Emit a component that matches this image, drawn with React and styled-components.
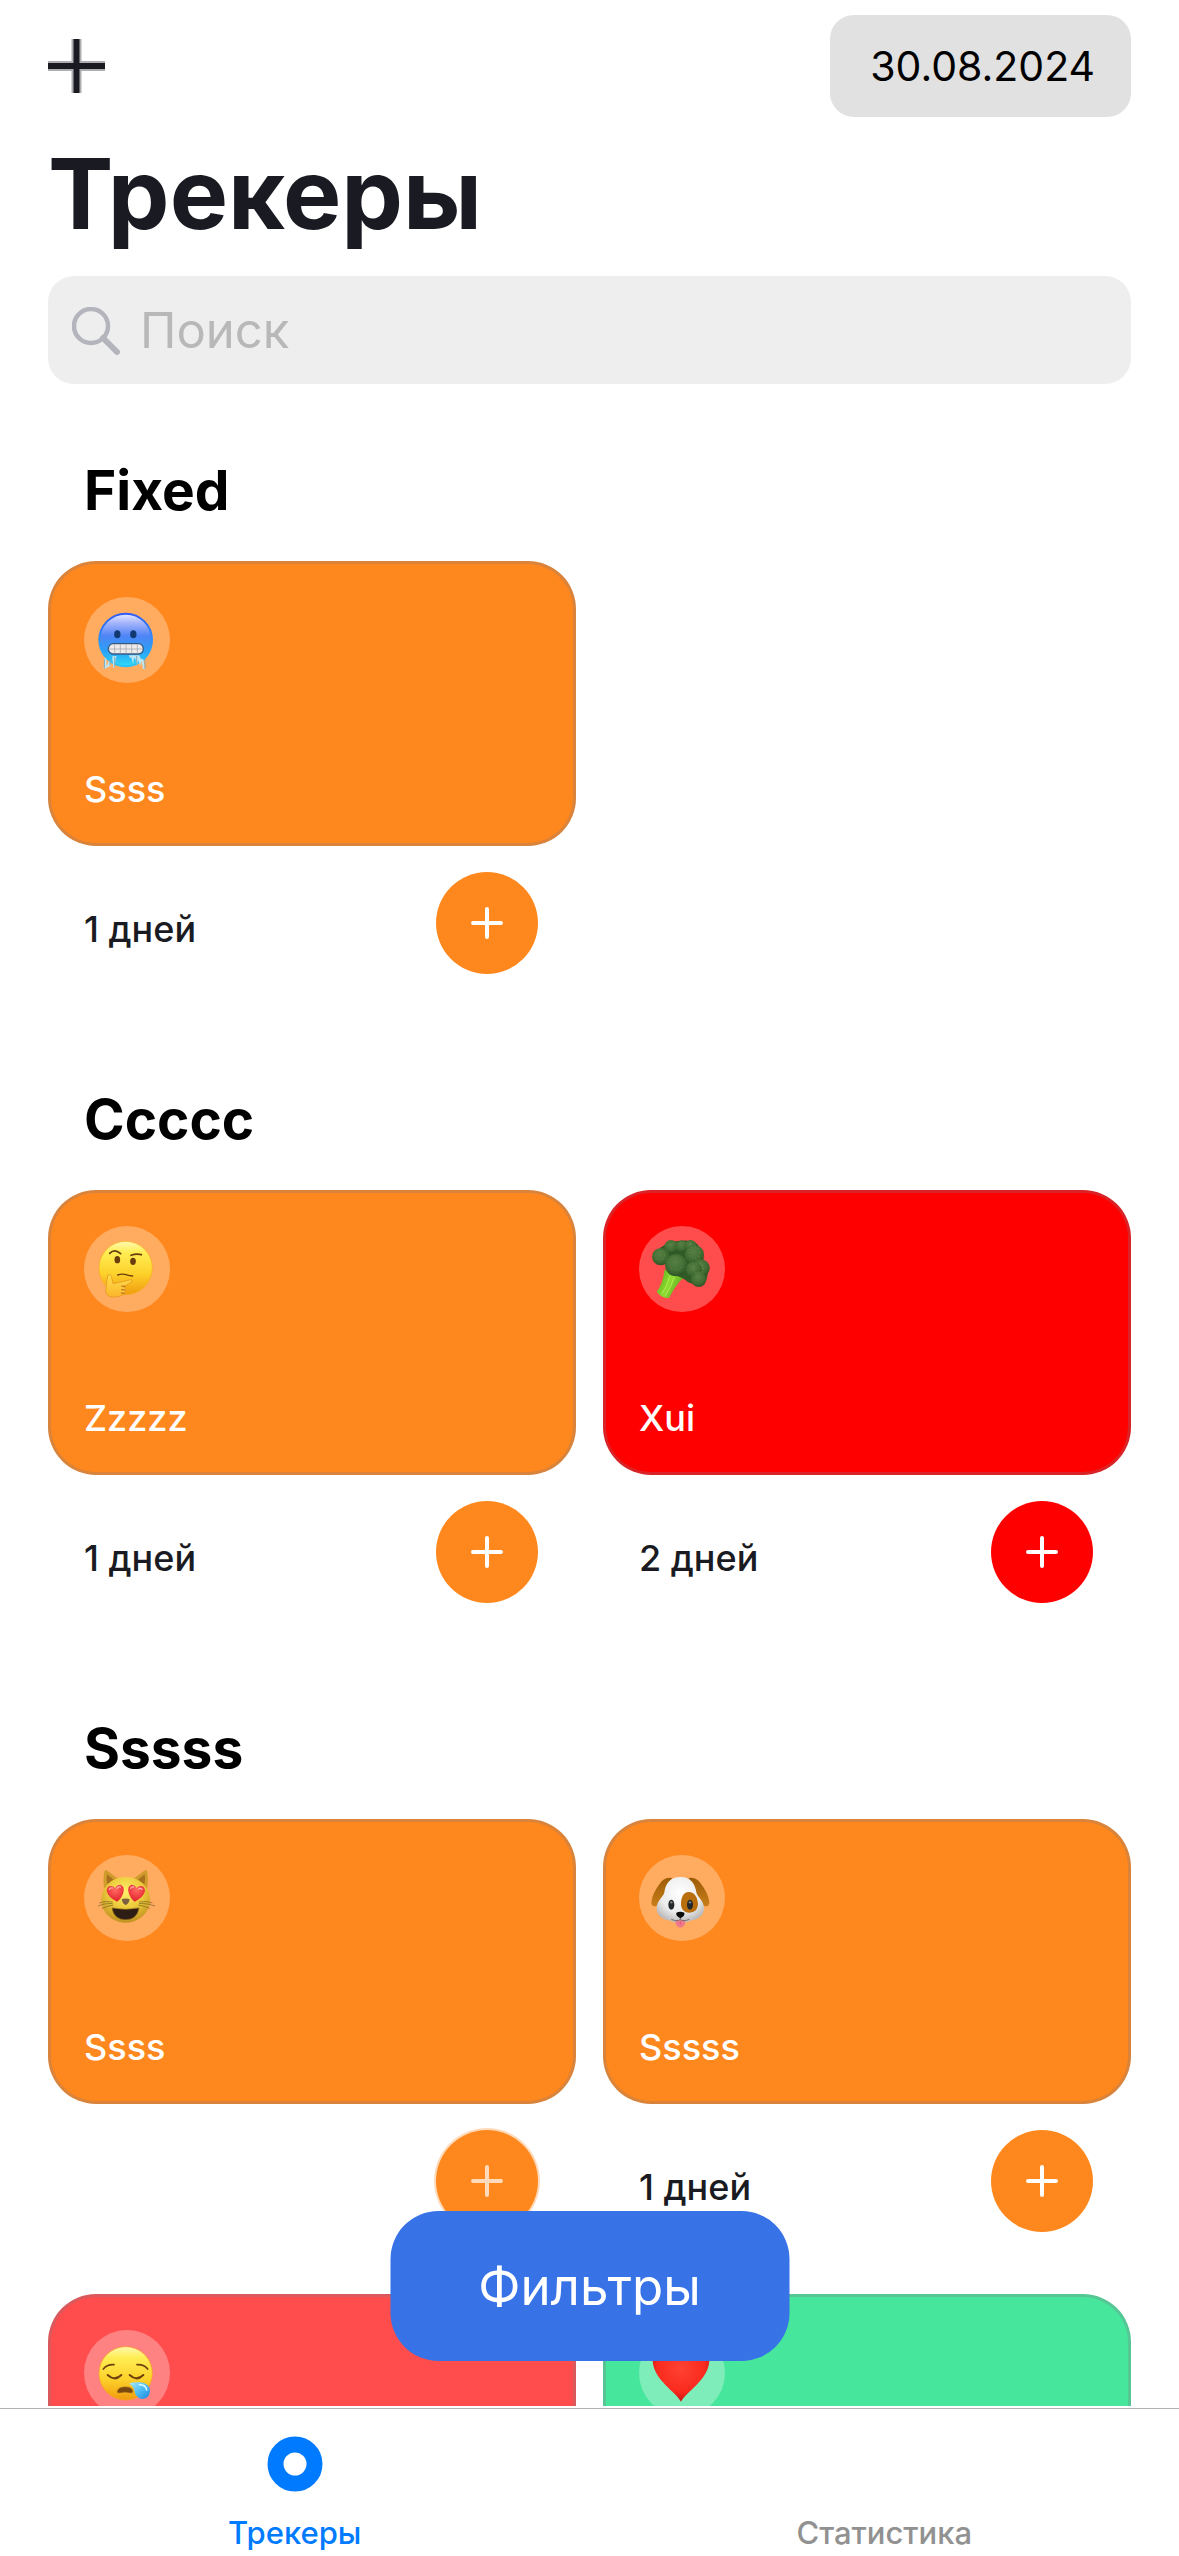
import React from "react";
import styled, { createGlobalStyle } from "styled-components";

const ORANGE = "#ff881e";
const RED = "#ff0000";
const CORAL = "#ff4d4d";
const GREEN = "#47e69d";

const GlobalStyle = createGlobalStyle`
  * { box-sizing: border-box; }
  body { margin: 0; background: #fff; }
  body, button, input { font-family: Inter, "Noto Sans", sans-serif; }
  button { border: 0; padding: 0; cursor: pointer; }
`;

const Screen = styled.div`
  display: flex;
  flex-direction: column;
  height: 100vh;
  background: #fff;
  color: #1a1b22;
`;

const Header = styled.header`
  padding: 15px 48px 0;
`;

const Toolbar = styled.div`
  display: flex;
  align-items: center;
  justify-content: space-between;
`;

const AddButton = styled.button`
  display: flex;
  background: none;
`;

const DateButton = styled.button`
  height: 102px;
  padding: 0 36px 0 40px;
  border-radius: 24px;
  background: #e1e1e1;
  color: #000;
  font-size: 41px;
`;

const Title = styled.h1`
  margin: 17px 0 22px;
  font-size: 98px;
  line-height: 120px;
  font-weight: 700;
`;

const SearchField = styled.label`
  display: flex;
  align-items: center;
  gap: 20px;
  height: 108px;
  padding: 2px 24px 0;
  border-radius: 26px;
  background: #eeeeee;
`;

const SearchInput = styled.input`
  flex: 1;
  min-width: 0;
  padding: 0;
  border: 0;
  outline: 0;
  background: none;
  color: #1a1b22;
  font-size: 49px;
  line-height: 60px;
  &::placeholder { color: #b8b8b9; opacity: 1; }
`;

const ListArea = styled.div`
  position: relative;
  flex: 1;
  min-height: 0;
  display: flex;
`;

const List = styled.main`
  flex: 1;
  display: flex;
  flex-direction: column;
  gap: 81px;
  padding: 73px 48px 0;
  overflow-y: auto;
  scrollbar-width: none;
`;

const SectionTitle = styled.h2`
  margin: 0 36px 38px;
  color: #000;
  font-size: 55px;
  line-height: 66px;
  font-weight: 700;
`;

const Grid = styled.div`
  display: grid;
  grid-template-columns: 1fr 1fr;
  gap: 31px 27px;
`;

const Card = styled.div`
  display: flex;
  flex-direction: column;
  align-items: flex-start;
  justify-content: space-between;
  height: 285px;
  padding: 33px;
  border: 3px solid rgba(124, 122, 132, 0.29);
  border-radius: 48px;
  background: ${(p) => p.$color};
`;

const EmojiBadge = styled.span`
  display: flex;
  width: 86px;
  height: 86px;
  border-radius: 50%;
  background: rgba(255, 255, 255, 0.3);
`;

const CardName = styled.span`
  color: #fff;
  font-size: 36px;
  line-height: 42px;
  font-weight: 500;
`;

const CardFooter = styled.div`
  display: flex;
  align-items: center;
  justify-content: space-between;
  padding: 26px 38px 31px 36px;
`;

const Days = styled.span`
  padding-top: 12px;
  font-size: 36px;
  line-height: 42px;
  font-weight: 500;
`;

const DoneButton = styled.button`
  display: flex;
  align-items: center;
  justify-content: center;
  width: 102px;
  height: 102px;
  border-radius: 50%;
  background: ${(p) => p.$color};
  color: ${(p) => (p.$dimmed ? "rgba(255, 255, 255, 0.7)" : "#fff")};
  box-shadow: ${(p) => (p.$dimmed ? "0 0 0 2px rgba(255, 136, 30, 0.3)" : "none")};
`;

const FilterButton = styled.button`
  position: absolute;
  bottom: 45px;
  left: 50%;
  transform: translateX(-50%);
  min-width: 399px;
  height: 150px;
  border-radius: 48px;
  background: #3772e7;
  color: #fff;
  font-size: 51px;
`;

const TabBar = styled.nav`
  display: grid;
  grid-template-columns: 1fr 1fr;
  margin-top: 2px;
  border-top: 1px solid #b2b2b6;
  background: #fff;
`;

const Tab = styled.a`
  display: flex;
  flex-direction: column;
  align-items: center;
  justify-content: flex-end;
  padding: 27px 0 5px;
  gap: 23px;
  color: ${(p) => (p.$active ? "#007bff" : "#919191")};
  font-size: 31px;
  line-height: 36px;
  font-weight: 500;
  text-decoration: none;
`;

const AddIcon = () => (
  <svg width="57" height="54" viewBox="0 0 57 54" aria-hidden="true">
    <path d="M28.5 0v54M0 27h57" stroke="#1a1b22" strokeWidth="10" opacity=".35" />
    <path d="M28.5 0v54M0 27h57" stroke="#1a1b22" strokeWidth="6" />
  </svg>
);

const SearchIcon = () => (
  <svg width="48" height="48" viewBox="0 0 48 48" fill="none" stroke="#b4b5bc" aria-hidden="true">
    <circle cx="19" cy="19" r="17" strokeWidth="4.500" />
    <path d="M31 31l14 14" strokeWidth="6" strokeLinecap="round" />
  </svg>
);

const PlusIcon = () => (
  <svg width="32" height="32" viewBox="0 0 32 32" stroke="currentColor" strokeWidth="4" strokeLinecap="round" aria-hidden="true">
    <path d="M16 2v28M2 16h28" />
  </svg>
);

const TabIcon = () => (
  <svg width="56" height="56" viewBox="0 0 56 56" fill="none" aria-hidden="true">
    <circle cx="28" cy="28" r="19.5" stroke="currentColor" strokeWidth="16" />
  </svg>
);

const FaceGradient = ({ id }) => (
  <linearGradient id={id} x1="0" y1="0" x2="0" y2="1">
    <stop offset="0" stopColor="#fff9b0" />
    <stop offset=".2" stopColor="#ffee55" />
    <stop offset=".6" stopColor="#fdd22b" />
    <stop offset="1" stopColor="#f09c0e" />
  </linearGradient>
);

const EmojiArt = ({ label, viewBox, children }) => (
  <svg width="86" height="86" viewBox={viewBox} role="img" aria-label={label}>
    {children}
  </svg>
);

const ColdFace = () => (
  <EmojiArt label="cold face" viewBox="12 51 258 258">
    <defs>
      <linearGradient id="cold" x1="0" y1="0" x2="0" y2="1">
        <stop offset="0" stopColor="#e8ecff" />
        <stop offset=".18" stopColor="#a3b3fb" />
        <stop offset=".42" stopColor="#5084f5" />
        <stop offset=".7" stopColor="#2a9ff6" />
        <stop offset="1" stopColor="#2fdcf6" />
      </linearGradient>
      <linearGradient id="coldRim" x1="0" y1="0" x2="0" y2="1">
        <stop offset="0" stopColor="#2f5cf5" />
        <stop offset="1" stopColor="#2bc4f5" />
      </linearGradient>
    </defs>
    <circle cx="137" cy="180" r="79" fill="url(#cold)" stroke="url(#coldRim)" strokeWidth="6" />
    <ellipse cx="112" cy="163" rx="9.500" ry="12" fill="#123a70" />
    <ellipse cx="160" cy="163" rx="9.500" ry="12" fill="#123a70" />
    <path d="M71 268l2-34 6 2 1 24 6-18 4 2 2 14 6-30h12q-5 10-5 34l-5 2-3-30-6 24zM146 226h32l4 10 8 2 5 30-6-2-5-22-4 14-5-18-4 14-5-18-4-2-3 18-5-20-4 2z" fill="#bfe6f2" />
    <path d="M73 238v28M195 238v28M104 230v30M170 228v22M90 240v16" stroke="#7fa8b4" strokeWidth="3" />
    <rect x="85" y="191" width="105" height="31" rx="15" fill="#eeebe9" stroke="#375a84" strokeWidth="4" />
    <path d="M86 207h103M104 193v28M121 193v28M138 193v28M155 193v28M172 193v28" stroke="#9c9fa8" strokeWidth="2" />
  </EmojiArt>
);

const ThinkingFace = () => (
  <EmojiArt label="thinking face" viewBox="12 45 258 258">
    <defs>
      <FaceGradient id="think" />
      <linearGradient id="hand" x1="0" y1="0" x2="0" y2="1">
        <stop offset="0" stopColor="#ffdf4d" />
        <stop offset="1" stopColor="#fbb52c" />
      </linearGradient>
    </defs>
    <circle cx="137" cy="171" r="80" fill="url(#think)" stroke="#f3ae1c" strokeWidth="2" />
    <g fill="none" stroke="#6b3d0d" strokeLinecap="round">
      <path d="M89 127q15-15 33 1M153 133q16-6 31-2" strokeWidth="5" />
      <path d="M113 192q14-5 25-1t20 4" strokeWidth="4" />
    </g>
    <ellipse cx="112" cy="146" rx="8.500" ry="11" fill="#6b3d0d" />
    <ellipse cx="159" cy="151" rx="8.500" ry="11" fill="#6b3d0d" />
    <path d="M84 191q9-2 11 9l4 18q30-6 52-12 8 0 4 6-10 9-24 14 8 4 5 10 3 5-2 9 1 6-7 8-12 6-30 5-20-1-20-22 2-22 7-45z" fill="url(#hand)" stroke="#e69a22" strokeWidth="2.500" />
    <path d="M125 225l10 2M125 236l9 1M124 246l8 1" stroke="#a9641a" strokeWidth="3" strokeLinecap="round" />
  </EmojiArt>
);

const Broccoli = () => (
  <EmojiArt label="broccoli" viewBox="27 45 258 258">
    <defs>
      <linearGradient id="stem" x1="0" y1="0" x2="1" y2=".4">
        <stop offset="0" stopColor="#4fa61a" />
        <stop offset=".5" stopColor="#8fdc30" />
        <stop offset="1" stopColor="#4c9a1d" />
      </linearGradient>
      <radialGradient id="floret" cx=".45" cy=".35" r=".7">
        <stop offset="0" stopColor="#588045" />
        <stop offset=".65" stopColor="#3f6a31" />
        <stop offset="1" stopColor="#284d20" />
      </radialGradient>
    </defs>
    <path d="M104 176l44 6 28 6-26 22q-20 24-33 51-20 2-37-19 18-22 24-66z" fill="url(#stem)" />
    <path d="M120 194q-10 36-24 54M134 196q-10 30-28 58" fill="none" stroke="#b4ec55" strokeWidth="3" />
    <path d="M88 112q40-30 100-22 30 14 34 60 20 40 4 60-20 18-52 4-10-12-34-20z" fill="#315a27" />
    <g fill="url(#floret)">
      <circle cx="123" cy="107" r="20" />
      <circle cx="155" cy="106" r="18" />
      <circle cx="182" cy="105" r="18" />
      <circle cx="92" cy="137" r="26" />
      <circle cx="193" cy="131" r="29" />
      <circle cx="213" cy="171" r="26" />
      <circle cx="191" cy="176" r="24" />
      <circle cx="206" cy="205" r="23" />
      <circle cx="138" cy="163" r="33" />
    </g>
    <g fill="none" stroke="#6f955a" strokeWidth="4" strokeDasharray="3 7" opacity=".55">
      <circle cx="90" cy="133" r="14" />
      <circle cx="137" cy="158" r="19" />
      <circle cx="193" cy="125" r="17" />
      <circle cx="206" cy="172" r="15" />
      <path d="M110 104q40-14 76-4" />
    </g>
  </EmojiArt>
);

const CatFace = () => (
  <EmojiArt label="smiling cat with heart-eyes" viewBox="12 42 258 258">
    <defs>
      <radialGradient id="cat" cx=".5" cy=".32" r=".72">
        <stop offset="0" stopColor="#fff06a" />
        <stop offset=".5" stopColor="#eccb3c" />
        <stop offset="1" stopColor="#bd8b1c" />
      </radialGradient>
      <radialGradient id="catHeart" cx=".5" cy=".3" r=".7">
        <stop offset="0" stopColor="#ff6b61" />
        <stop offset="1" stopColor="#e21f2b" />
      </radialGradient>
    </defs>
    <path d="M72 142q-4-34 2-53 3-4 8 0l34 26zM202 142q4-34-1-53-3-4-8 0l-34 26z" fill="#cf9c2c" />
    <path d="M82 130q-4-18-1-30l22 18zM193 130q4-18 1-30l-22 18z" fill="#a8701c" />
    <path d="M137 108c42 0 72 30 73 68 0 40-36 69-73 69s-73-29-73-69c1-38 31-68 73-68z" fill="url(#cat)" />
    <g fill="none" stroke="#77601c" strokeWidth="2">
      <path d="M98 183q-26-4-40 3M98 187q-28 0-44 8M100 192q-22 4-34 10M177 183q26-4 40 3M177 187q28 0 48 8M175 192q22 4 34 10" />
    </g>
    <path d="M96 201q41 8 81 0-6 35-40 35-35 0-41-35z" fill="#2d1d14" stroke="#8d681c" strokeWidth="2" />
    <path d="M125 175q12-5 24 0-3 15-12 17-9-2-12-17z" fill="#7c603f" />
    <g fill="url(#catHeart)">
      <path d="M111 182q-27-13-31-32 1-17 15-15 8 1 10 7 5-12 17-11 13 5 8 24-5 17-19 27z" />
      <path d="M164 182q27-13 31-32-1-17-15-15-8 1-10 7-5-12-16-11-13 5-8 24 5 17 18 27z" />
    </g>
    <path d="M88 145q4-6 9-4M111 142q4-6 10-4M152 142q3-6 9-4M176 144q5-4 10 1" stroke="#ffb2a8" strokeWidth="4" strokeLinecap="round" fill="none" />
  </EmojiArt>
);

const DogFace = () => (
  <EmojiArt label="dog face" viewBox="27 42 258 258">
    <defs>
      <radialGradient id="dog" cx=".5" cy=".35" r=".65">
        <stop offset="0" stopColor="#ffffff" />
        <stop offset=".65" stopColor="#ececec" />
        <stop offset="1" stopColor="#b9b7b8" />
      </radialGradient>
      <linearGradient id="ear" x1="0" y1="0" x2="0" y2="1">
        <stop offset="0" stopColor="#9c5b05" />
        <stop offset="1" stopColor="#c97e1a" />
      </linearGradient>
    </defs>
    <path d="M126 111q-19-3-33 12-28 36-29 62 1 12 13 11 14-3 26-30zM176 111q19-3 33 12 28 36 29 62-1 12-13 11-14-3-26-30z" fill="url(#ear)" />
    <path d="M151 108c30 0 44 18 48 46 2 14 23 24 23 48 0 26-24 36-42 37q-14 8-29 8t-29-8c-18-1-42-11-42-37 0-24 21-34 23-48 4-28 18-46 48-46z" fill="url(#dog)" />
    <path d="M176 153c20 0 28 22 28 38-2 16-12 23-26 24-17-1-26-12-25-30 1-18 9-32 23-32z" fill="#b86e0c" />
    <ellipse cx="124" cy="191" rx="9" ry="15" fill="#25282a" />
    <ellipse cx="180" cy="191" rx="9" ry="15" fill="#25282a" />
    <circle cx="124" cy="184" r="3.500" fill="#7e8487" />
    <circle cx="180" cy="184" r="3.500" fill="#7e8487" />
    <path d="M137 238h28q3 20-14 22-17-2-14-22z" fill="#f0788c" />
    <path d="M151 238v13" stroke="#cc5268" strokeWidth="2" />
    <path d="M151 230v7M124 235q18 8 27 0 9 8 27 0" fill="none" stroke="#77706d" strokeWidth="3" />
    <path d="M139 215q12-5 24 0 3 9-12 17-15-8-12-17z" fill="#0c0c0c" />
  </EmojiArt>
);

const SleepyFace = () => (
  <EmojiArt label="sleepy face" viewBox="12 117 258 258">
    <defs>
      <FaceGradient id="sleepy" />
      <linearGradient id="drop" x1="0" y1="0" x2="1" y2="1">
        <stop offset="0" stopColor="#a7ecff" />
        <stop offset=".5" stopColor="#4fbdf2" />
        <stop offset="1" stopColor="#1686dc" />
      </linearGradient>
    </defs>
    <circle cx="137" cy="247" r="80" fill="url(#sleepy)" stroke="#f3a51c" strokeWidth="2" />
    <g fill="none" stroke="#6e400c" strokeLinecap="round">
      <path d="M70 234q10-14 32-13M171 221q22-1 32 13" strokeWidth="5" />
      <path d="M83 252q21 20 41 0M149 252q21 20 41 0" strokeWidth="6" />
    </g>
    <path d="M112 302q2-14 24-14 22 0 22 14-2 5-8 3-14-4-30 0-7 2-8-3z" fill="#7a470f" stroke="#94601a" strokeWidth="2" />
    <path d="M148 278q7-5 34-4 27 4 28 26-2 23-23 24-21-2-24-26-2-12-15-20z" fill="url(#drop)" />
    <path d="M178 281q20 0 22 16" stroke="#d3f6ff" strokeWidth="5" strokeLinecap="round" fill="none" />
  </EmojiArt>
);

const Heart = () => (
  <EmojiArt label="red heart" viewBox="0 0 258 258">
    <defs>
      <radialGradient id="heart" cx=".5" cy=".4" r=".65">
        <stop offset="0" stopColor="#ff4232" />
        <stop offset=".65" stopColor="#f92a1e" />
        <stop offset="1" stopColor="#b60e0c" />
      </radialGradient>
    </defs>
    <path d="M126 215C112 186 44 150 41 92c0-48 62-58 85-18 23-40 85-30 85 18-3 58-71 94-85 123z" fill="url(#heart)" />
  </EmojiArt>
);

const sections = [
  { title: "Fixed", trackers: [{ name: "Ssss", color: ORANGE, days: "1 дней", Emoji: ColdFace }] },
  {
    title: "Ccccc",
    trackers: [
      { name: "Zzzzz", color: ORANGE, days: "1 дней", Emoji: ThinkingFace },
      { name: "Xui", color: RED, days: "2 дней", Emoji: Broccoli },
    ],
  },
  {
    title: "Sssss",
    trackers: [
      { name: "Ssss", color: ORANGE, days: "", dimmed: true, Emoji: CatFace },
      { name: "Sssss", color: ORANGE, days: "1 дней", Emoji: DogFace },
      { name: "", color: CORAL, days: "", Emoji: SleepyFace },
      { name: "", color: GREEN, days: "", Emoji: Heart },
    ],
  },
];

function Tracker({ name, color, days, dimmed, Emoji }) {
  return (
    <article>
      <Card $color={color}>
        <EmojiBadge>
          <Emoji />
        </EmojiBadge>
        <CardName>{name}</CardName>
      </Card>
      <CardFooter>
        <Days>{days}</Days>
        <DoneButton $color={color} $dimmed={dimmed} aria-label="Отметить">
          <PlusIcon />
        </DoneButton>
      </CardFooter>
    </article>
  );
}

export default function App() {
  return (
    <>
      <GlobalStyle />
      <Screen>
        <Header>
          <Toolbar>
            <AddButton aria-label="Добавить">
              <AddIcon />
            </AddButton>
            <DateButton>30.08.2024</DateButton>
          </Toolbar>
          <Title>Трекеры</Title>
          <SearchField>
            <SearchIcon />
            <SearchInput type="text" placeholder="Поиск" aria-label="Поиск" />
          </SearchField>
        </Header>
        <ListArea>
          <List>
            {sections.map((section) => (
              <section key={section.title}>
                <SectionTitle>{section.title}</SectionTitle>
                <Grid>
                  {section.trackers.map((tracker, i) => (
                    <Tracker key={i} {...tracker} />
                  ))}
                </Grid>
              </section>
            ))}
          </List>
          <FilterButton>Фильтры</FilterButton>
        </ListArea>
        <TabBar>
          <Tab href="#trackers" $active>
            <TabIcon />
            Трекеры
          </Tab>
          <Tab href="#statistics">Статистика</Tab>
        </TabBar>
      </Screen>
    </>
  );
}
